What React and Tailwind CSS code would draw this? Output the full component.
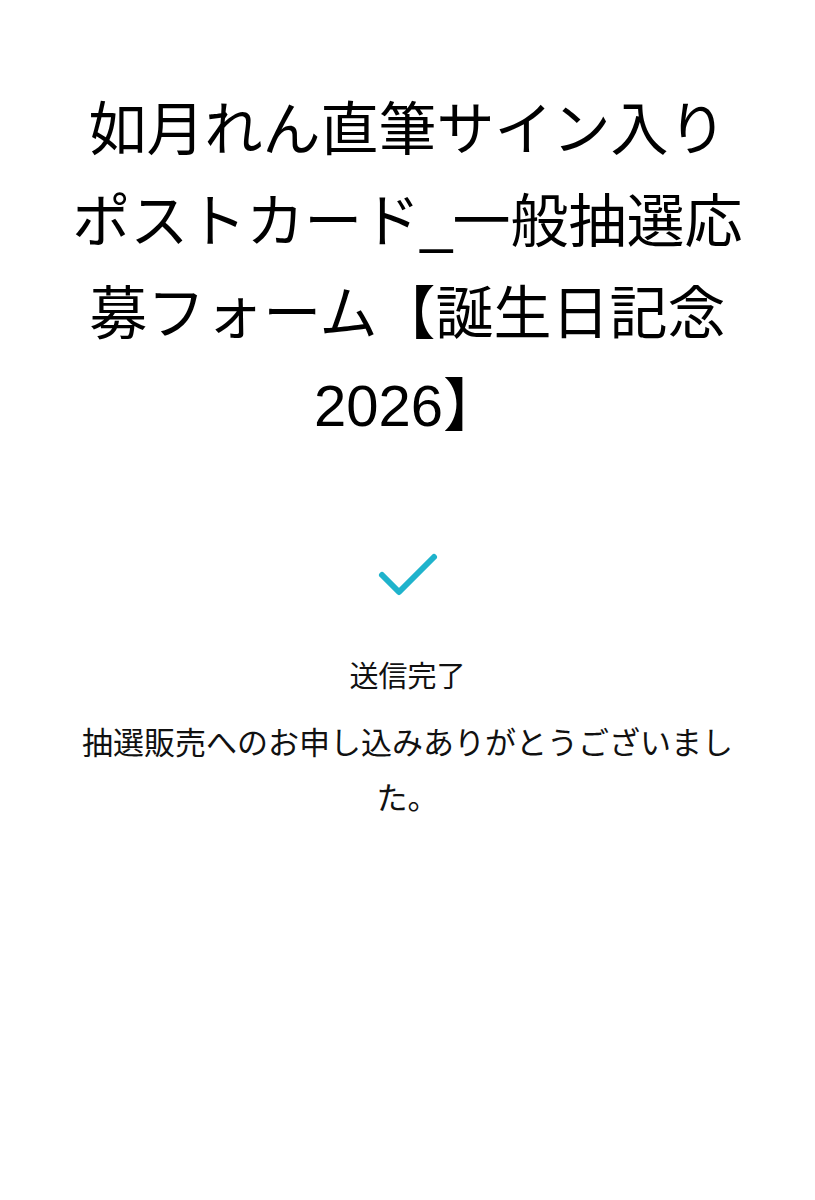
export default function App() {
  const font = { fontFamily: '"Liberation Sans", "Noto Sans CJK JP", sans-serif' };
  return (
    <div className="min-h-[1200px] bg-white text-black" style={font}>
      <div className="px-8 pt-[84px] flex flex-col items-center">
        <h1 className="text-[58px] leading-[92px] font-normal text-center max-w-[682px]">
          如月れん直筆サイン入りポストカード_一般抽選応募フォーム【誕生日記念2026】
        </h1>
        <div className="mt-[100px] flex justify-center">
          <svg width="62" height="48" viewBox="0 0 62 48" fill="none">
            <path d="M5 23 L22 40 L57 5" stroke="#1fb3cc" strokeWidth="6" strokeLinecap="round" strokeLinejoin="round" />
          </svg>
        </div>
        <p className="mt-[52px] text-[29px] leading-[50px] text-[#111]">送信完了</p>
        <p className="mt-[14px] text-[31px] leading-[55px] text-center max-w-[666px] text-[#111]">
          抽選販売へのお申し込みありがとうございました。
        </p>
      </div>
    </div>
  );
}
